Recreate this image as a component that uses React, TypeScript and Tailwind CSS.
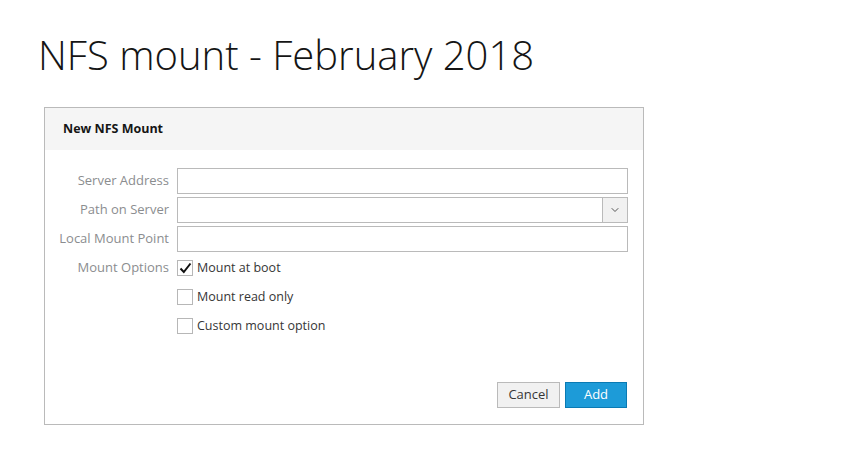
import { FiChevronDown } from "react-icons/fi";

const font = { fontFamily: '"Open Sans", sans-serif' };

const Label = ({ text }: { text: string }) => (
  <div className="w-[125px] shrink-0 pr-[1px] text-right text-[13px] text-[#8b8d8f]">{text}</div>
);

const Check = ({ label, checked }: { label: string; checked?: boolean }) => (
  <label className="flex h-[16px] items-center gap-[4px] text-[12.5px] text-[#363636]">
    <span className="flex h-[16px] w-[16px] items-center justify-center border border-[#b7b7b7] bg-white">
      {checked && (
        <svg width="13" height="12" viewBox="0 0 13 12">
          <path d="M1.5 6.5 L4.8 10 L11.5 1.5" fill="none" stroke="#111" strokeWidth="2" />
        </svg>
      )}
    </span>
    {label}
  </label>
);

const App = () => {
  return (
    <div className="h-[475px] w-[859px] bg-white" style={font}>
      <h1 className="pl-[38px] pt-[28px] text-[40px] font-light leading-[54px] text-[#151515]">
        NFS mount - February 2018
      </h1>
      <div className="ml-[44px] mt-[25px] flex h-[318px] w-[600px] flex-col border border-[#bababa]">
        <div className="flex h-[42px] items-center bg-[#f5f5f5] pl-[18px] text-[12.5px] font-bold text-[#151515]">
          New NFS Mount
        </div>
        <div className="flex flex-col pt-[18px]">
          <div className="flex items-center gap-[7px]">
            <Label text="Server Address" />
            <div className="h-[26px] w-[451px] border border-[#bababa] bg-white" />
          </div>
          <div className="mt-[3px] flex items-center gap-[7px]">
            <Label text="Path on Server" />
            <div className="flex h-[26px] w-[451px] border border-[#bababa] bg-white">
              <div className="flex-1" />
              <div className="flex w-[25px] items-center justify-center border-l border-[#bababa] bg-[#f1f1f1] text-[#555]">
                <FiChevronDown size={12} />
              </div>
            </div>
          </div>
          <div className="mt-[3px] flex items-center gap-[7px]">
            <Label text="Local Mount Point" />
            <div className="h-[26px] w-[451px] border border-[#bababa] bg-white" />
          </div>
          <div className="mt-[7px] flex gap-[7px]">
            <div className="leading-[16px]">
              <Label text="Mount Options" />
            </div>
            <div className="flex flex-col gap-[13px] pt-[1px]">
              <Check label="Mount at boot" checked />
              <Check label="Mount read only" />
              <Check label="Custom mount option" />
            </div>
          </div>
        </div>
        <div className="mt-auto flex justify-end gap-[5px] pb-[16px] pr-[16px]">
          <button className="h-[26px] w-[63px] border border-[#bababa] bg-[#f1f1f1] text-[13px] text-[#363636]">
            Cancel
          </button>
          <button className="h-[26px] w-[62px] border border-[#0a7ab3] bg-[#1d9bd8] text-[13px] text-white">
            Add
          </button>
        </div>
      </div>
    </div>
  );
};

export default App;
